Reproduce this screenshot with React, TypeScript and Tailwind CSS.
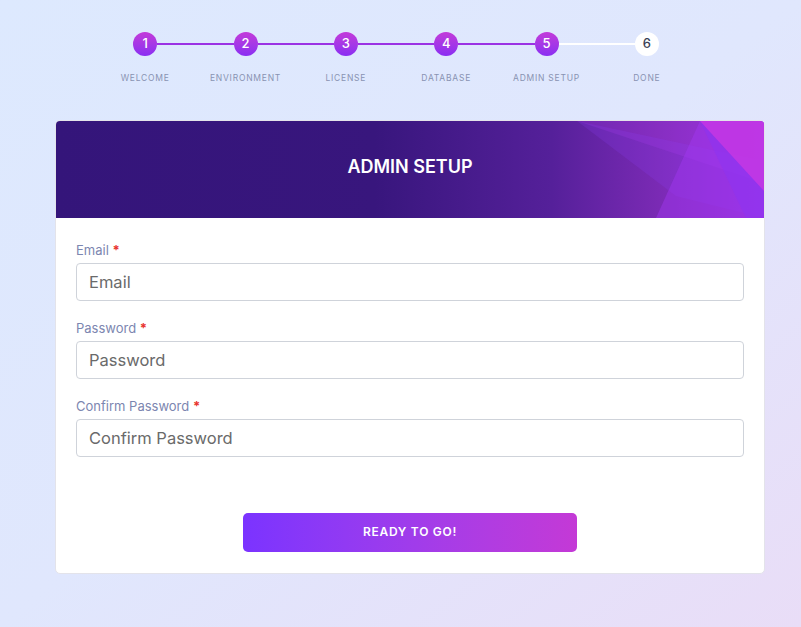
import React from 'react';

const steps = ['Welcome', 'Environment', 'License', 'Database', 'Admin Setup', 'Done'];
const current = 5;

const fields = [
  { label: 'Email', type: 'email' },
  { label: 'Password', type: 'password' },
  { label: 'Confirm Password', type: 'password' },
];

const Stepper = () => {
  return (
    <div className="ml-[95px] grid w-[602px] grid-cols-6">
      {steps.map((step, i) => {
        const n = i + 1;
        const done = n <= current;
        const leftColor = i === 0 ? 'bg-transparent' : n <= current ? 'bg-[#9b32e4]' : 'bg-white';
        const rightColor = n === steps.length ? 'bg-transparent' : n + 1 <= current ? 'bg-[#9b32e4]' : 'bg-white';
        return (
          <div key={step} className="flex flex-col items-center">
            <div className="flex w-full items-center">
              <div className={`h-[2px] flex-1 ${leftColor}`} />
              <div
                className={
                  done
                    ? 'flex h-6 w-6 items-center justify-center rounded-full bg-gradient-to-b from-[#c33ad9] to-[#8a2df2] text-[13px] font-medium text-white'
                    : 'flex h-6 w-6 items-center justify-center rounded-full bg-white text-[13px] font-medium text-[#3a3f55]'
                }
              >
                {n}
              </div>
              <div className={`h-[2px] flex-1 ${rightColor}`} />
            </div>
            <div className="mt-[18px] text-[8.5px] uppercase leading-none tracking-[0.09em] text-[#8993b2]">
              {step}
            </div>
          </div>
        );
      })}
    </div>
  );
};

const HeaderShapes = () => (
  <svg className="absolute inset-0 h-full w-full" viewBox="0 0 708 97" preserveAspectRatio="none">
    <defs>
      <linearGradient id="hdr" x1="0" y1="0" x2="1" y2="0">
        <stop offset="0" stopColor="#34157a" />
        <stop offset="0.45" stopColor="#38167d" />
        <stop offset="0.7" stopColor="#55209a" />
        <stop offset="0.85" stopColor="#7a2ab4" />
        <stop offset="1" stopColor="#9a30dc" />
      </linearGradient>
    </defs>
    <rect width="708" height="97" fill="url(#hdr)" />
    <polygon points="521,0 708,0 708,62" fill="#c040ff" opacity="0.18" />
    <polygon points="521,0 620,75 708,97 708,40" fill="#9040ff" opacity="0.18" />
    <polygon points="644,0 708,0 708,97 600,97" fill="#a238f2" opacity="0.45" />
    <polygon points="644,0 708,0 708,97 690,97" fill="#8e34f0" opacity="0.6" />
    <polygon points="644,0 708,0 708,70" fill="#cc38e2" opacity="0.75" />
  </svg>
);

export default function App() {
  return (
    <div
      className="min-h-[627px] bg-gradient-to-br from-[#dde9fe] via-[#e0e7fd] to-[#e9ddf7] pt-8"
      style={{ fontFamily: 'Inter, "Noto Sans", sans-serif' }}
    >
      <Stepper />

      <div className="ml-[55px] mt-[37px] w-[710px] overflow-hidden rounded-[5px] border border-[#e3e3ea] bg-white">
        <div className="relative flex h-[97px] items-center justify-center pb-[5px]">
          <HeaderShapes />
          <h1 className="relative text-[18px] font-semibold text-white">ADMIN SETUP</h1>
        </div>

        <form className="flex flex-col gap-[18px] px-5 pt-[23px]">
          {fields.map((f) => (
            <div key={f.label}>
              <label className="mb-[4px] block text-[13px] leading-[18px] text-[#7c86b0]">
                {f.label} <span className="font-bold text-[#e8342f]">*</span>
              </label>
              <input
                type={f.type}
                placeholder={f.label}
                className="h-[38px] w-full rounded-[4px] border border-[#cfd3da] px-3 text-[16.5px] text-[#555] outline-none placeholder:text-[#6a6a6a]"
              />
            </div>
          ))}
        </form>

        <div className="flex justify-center pb-[21px] pt-[56px]">
          <button className="h-[39px] w-[334px] rounded-[5px] bg-gradient-to-r from-[#7b33ff] to-[#c439d6] text-[12px] font-semibold tracking-[0.06em] text-white">
            READY TO GO!
          </button>
        </div>
      </div>
    </div>
  );
}
